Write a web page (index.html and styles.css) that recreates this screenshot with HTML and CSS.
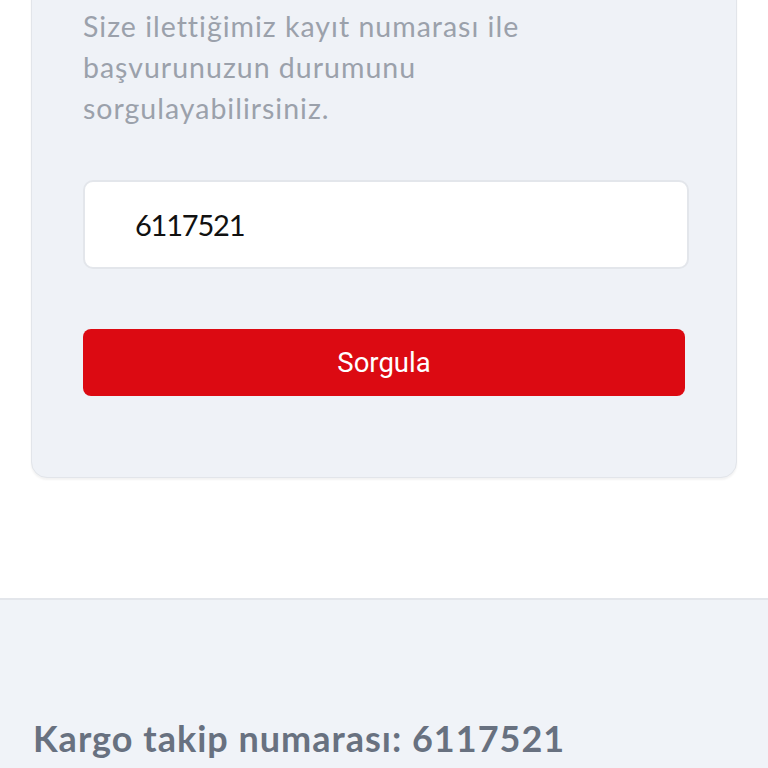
FILE: index.html
```html
<!DOCTYPE html>
<html lang="tr">
<head>
    <meta charset="UTF-8">
    <meta name="viewport" content="width=device-width, initial-scale=1.0">
    <title>Başvuru Sorgulama</title>
    <link rel="stylesheet" href="styles.css">
</head>
<body>
    <div class="query-card">
        <p class="query-info">Size ilettiğimiz kayıt numarası ile başvurunuzun durumunu sorgulayabilirsiniz.</p>
        <input type="text" class="query-input" value="6117521">
        <button class="query-btn">Sorgula</button>
    </div>

    <div class="result-section">
        <h2 class="result-title">Kargo takip numarası: 6117521</h2>
    </div>
</body>
</html>
```

FILE: styles.css
```css
* {
    margin: 0;
    padding: 0;
    box-sizing: border-box;
}

body {
    font-family: "Lato", "Noto Sans", sans-serif;
    background-color: #ffffff;
    overflow: hidden;
}

/* Tarjeta de consulta */
.query-card {
    width: 706px;
    margin: -20px 0 0 31px;
    padding: 25px 47px 81px 51px;
    background-color: #eff2f7;
    border: 1px solid #e2e5ea;
    border-radius: 16px;
    box-shadow: 0 2px 2px rgba(0, 0, 0, 0.05);
}

.query-info {
    width: 520px;
    font-size: 28.5px;
    line-height: 41px;
    letter-spacing: 1px;
    color: #9ba1ab;
    margin-bottom: 51px;
}

.query-input {
    display: block;
    width: 606px;
    height: 89px;
    padding: 0 50px;
    font-family: "Lato", sans-serif;
    font-size: 29px;
    letter-spacing: -1.2px;
    color: #111;
    background-color: #fff;
    border: 2px solid #e3e6eb;
    border-radius: 10px;
    outline: none;
}

.query-btn {
    display: block;
    width: 602px;
    height: 67px;
    margin-top: 60px;
    background-color: #dc0a12;
    color: #fff;
    border: none;
    border-radius: 8px;
    font-family: "Roboto", sans-serif;
    font-size: 27.5px;
}

/* Sección inferior */
.result-section {
    margin-top: 120px;
    height: 200px;
    border-top: 2px solid #e3e6eb;
    background-color: #f0f3f8;
    padding: 116px 33px 0;
}

.result-title {
    font-size: 36px;
    font-weight: 700;
    letter-spacing: 1px;
    color: #687180;
}
```
